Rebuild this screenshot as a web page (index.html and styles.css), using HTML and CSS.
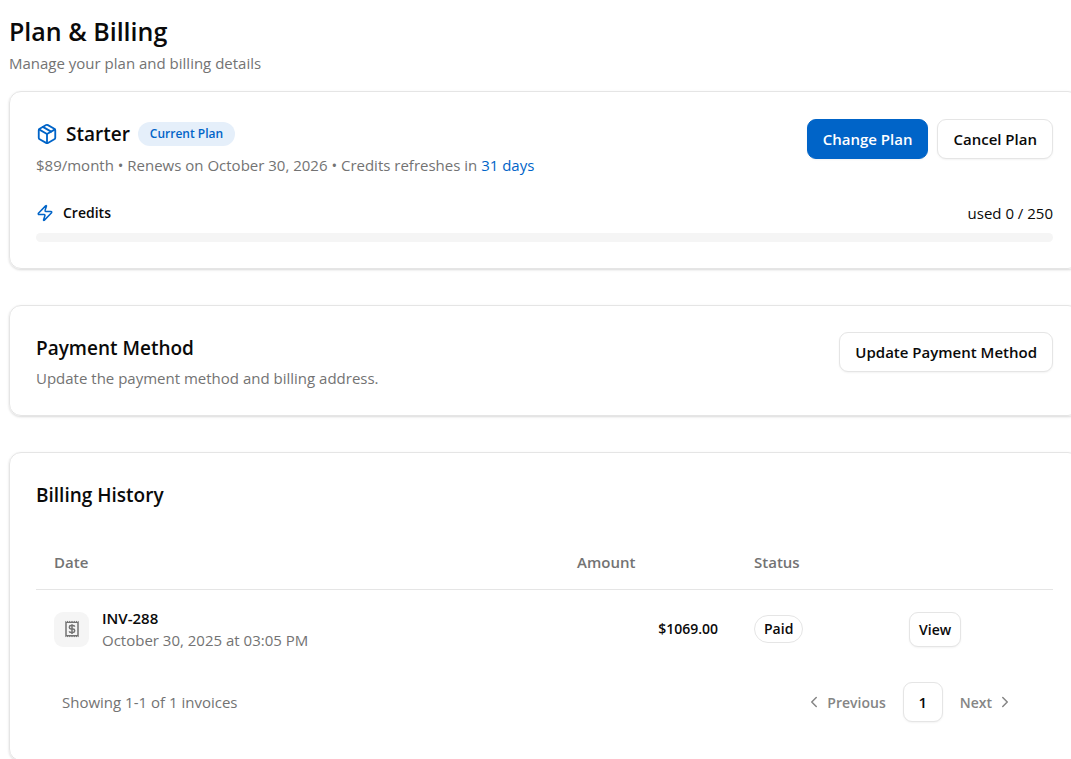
FILE: index.html
```html
<!DOCTYPE html>
<html lang="en">
<head>
    <meta charset="UTF-8">
    <meta name="viewport" content="width=device-width, initial-scale=1.0">
    <title>Plan &amp; Billing</title>
    <link rel="stylesheet" href="styles.css">
</head>
<body>
    <main class="page">
        <header class="page-header">
            <h1>Plan &amp; Billing</h1>
            <p class="muted">Manage your plan and billing details</p>
        </header>

        <!-- Current plan -->
        <section class="card plan-card">
            <div class="card-top">
                <div>
                    <div class="plan-title">
                        <svg class="icon icon-plan" viewBox="0 0 24 24" width="22" height="22">
                            <path d="M11 21.73a2 2 0 0 0 2 0l7-4A2 2 0 0 0 21 16V8a2 2 0 0 0-1-1.73l-7-4a2 2 0 0 0-2 0l-7 4A2 2 0 0 0 3 8v8a2 2 0 0 0 1 1.73z"/>
                            <path d="M12 22V12"/>
                            <path d="M3.29 7 12 12l8.71-5"/>
                            <path d="m7.5 4.27 9 5.15"/>
                        </svg>
                        <h2>Starter</h2>
                        <span class="plan-badge">Current Plan</span>
                    </div>
                    <p class="muted">$89/month • Renews on October 30, 2026 • Credits refreshes in <span class="days">31 days</span></p>
                </div>
                <div class="actions">
                    <button type="button" class="btn btn-primary">Change Plan</button>
                    <button type="button" class="btn">Cancel Plan</button>
                </div>
            </div>
            <div class="credits">
                <svg class="icon" viewBox="0 0 24 24" width="18" height="18">
                    <path d="M4 14a1 1 0 0 1-.78-1.63l9.9-10.2a.5.5 0 0 1 .86.46l-1.92 6.02A1 1 0 0 0 13 10h7a1 1 0 0 1 .78 1.63l-9.9 10.2a.5.5 0 0 1-.86-.46l1.92-6.02A1 1 0 0 0 11 14z"/>
                </svg>
                <span class="credits-label">Credits</span>
                <span class="credits-used">used 0 / 250</span>
            </div>
            <div class="progress" role="progressbar" aria-label="Credits" aria-valuenow="0" aria-valuemin="0" aria-valuemax="250"></div>
        </section>

        <!-- Payment method -->
        <section class="card payment-card">
            <div class="card-top">
                <div>
                    <h2>Payment Method</h2>
                    <p class="muted">Update the payment method and billing address.</p>
                </div>
                <button type="button" class="btn">Update Payment Method</button>
            </div>
        </section>

        <!-- Billing history -->
        <section class="card history-card">
            <h2>Billing History</h2>
            <table class="invoices">
                <thead>
                    <tr>
                        <th class="col-date">Date</th>
                        <th class="col-amount">Amount</th>
                        <th class="col-status">Status</th>
                        <th class="col-action"></th>
                    </tr>
                </thead>
                <tbody>
                    <tr>
                        <td>
                            <div class="invoice">
                                <span class="invoice-icon">
                                    <svg viewBox="0 0 24 24" width="18" height="18">
                                        <path fill-rule="evenodd" d="M3 1l1.500 1.500L6 1l1.500 1.500L9 1l1.500 1.500L12 1l1.500 1.500L15 1l1.500 1.500L18 1l1.500 1.500L21 1v22l-1.500-1.500L18 23l-1.500-1.500L15 23l-1.500-1.500L12 23l-1.500-1.500L9 23l-1.500-1.500L6 23l-1.500-1.500L3 23zM5 4v16h14V4z"/>
                                        <path class="dollar" d="M15.500 9c0-1-1-1.600-2.200-1.600h-2.600a2.200 2.200 0 0 0 0 4.500h2.600a2.200 2.200 0 0 1 0 4.600h-2.600c-1.300 0-2.200-.6-2.200-1.600M12 5.500v13"/>
                                    </svg>
                                </span>
                                <div>
                                    <div class="invoice-number">INV-288</div>
                                    <div class="invoice-date">October 30, 2025 at 03:05 PM</div>
                                </div>
                            </div>
                        </td>
                        <td class="amount">$1069.00</td>
                        <td><span class="status">Paid</span></td>
                        <td><button type="button" class="btn btn-small">View</button></td>
                    </tr>
                </tbody>
            </table>
            <div class="table-footer">
                <p class="muted">Showing 1-1 of 1 invoices</p>
                <nav class="pagination" aria-label="Pagination">
                    <button type="button" class="page-link" disabled>
                        <svg class="icon" viewBox="0 0 24 24" width="18" height="18"><path d="m15 18-6-6 6-6"/></svg>
                        Previous
                    </button>
                    <button type="button" class="btn page-number">1</button>
                    <button type="button" class="page-link" disabled>
                        Next
                        <svg class="icon" viewBox="0 0 24 24" width="18" height="18"><path d="m9 18 6-6-6-6"/></svg>
                    </button>
                </nav>
            </div>
        </section>
    </main>
</body>
</html>
```
FILE: styles.css
```css
* {
    box-sizing: border-box;
}

body {
    margin: 0;
    font-family: "Segoe UI", "Open Sans", sans-serif;
    font-size: 15px;
    line-height: 22px;
    color: #0a0a0a;
    background-color: #fff;
    overflow: hidden;
}

h1, h2, p {
    margin: 0;
}

h1 {
    font-size: 25px;
    font-weight: 600;
    line-height: 36px;
}

h2 {
    font-size: 19px;
    font-weight: 600;
    line-height: 28px;
}

.page {
    display: flex;
    flex-direction: column;
    gap: 36px;
    padding: 13px 0 0 9px;
    margin-right: -9px; /* Cards run past the right edge */
}

.page-header {
    margin-bottom: -19px; /* Header sits closer to the first card */
}

.page-header .muted {
    margin-top: 3px;
}

.muted {
    color: #737373;
}

.card {
    padding: 26px;
    border: 1px solid #e5e5e5;
    border-radius: 12px;
    box-shadow: 0 1px 3px rgba(0, 0, 0, 0.1), 0 1px 2px rgba(0, 0, 0, 0.06);
}

.plan-card {
    padding-top: 27px;
}

.card-top {
    display: flex;
    justify-content: space-between;
    align-items: flex-start;
}

.plan-title {
    display: flex;
    align-items: center;
    gap: 8px;
    padding-top: 1px;
    margin-bottom: 6px;
}

.icon {
    fill: none;
    stroke: currentColor;
    stroke-width: 2;
    stroke-linecap: round;
    stroke-linejoin: round;
    flex-shrink: 0;
}

.plan-title .icon,
.credits .icon,
.days {
    color: #0064c8;
}

.plan-badge {
    padding: 2px 12px;
    border-radius: 12px;
    background-color: #e5effa;
    color: #0064c8;
    font-size: 12px;
    font-weight: 600;
    line-height: 20px;
}

.actions {
    display: flex;
    gap: 9px;
}

.btn {
    height: 40px;
    padding: 0 15px;
    border: 1px solid #e5e5e5;
    border-radius: 9px;
    background-color: #fff;
    color: #0a0a0a;
    font-family: inherit;
    font-size: 15px;
    font-weight: 600;
    box-shadow: 0 1px 2px rgba(0, 0, 0, 0.05);
    cursor: pointer;
}

.btn-primary {
    border-color: #0064c8;
    background-color: #0064c8;
    color: #fff;
}

.btn-small {
    height: 35px;
    padding: 0 9px;
    font-size: 14px;
}

.credits {
    display: flex;
    align-items: center;
    gap: 9px;
    margin-top: 26px;
    margin-bottom: 9px;
}

.credits-label {
    font-size: 14px;
    font-weight: 600;
}

.credits-used {
    margin-left: auto;
}

.progress {
    height: 9px;
    border-radius: 5px;
    background-color: #f5f5f5;
}

.payment-card h2 {
    padding-top: 2px;
    margin-bottom: 5px;
}

.history-card {
    padding-top: 28px;
    padding-bottom: 38px;
}

/* Invoices table */
.invoices {
    width: 100%;
    margin-top: 27px;
    border-collapse: collapse;
    table-layout: fixed;
}

.invoices th {
    height: 53px;
    padding: 0 18px;
    border-bottom: 1px solid #e5e5e5;
    color: #737373;
    font-weight: 600;
    text-align: left;
}

.invoices td {
    height: 80px;
    padding: 0 18px;
}

.col-amount {
    width: 177px;
}

.col-status {
    width: 155px;
}

.col-action {
    width: 162px;
}

.invoice {
    display: flex;
    align-items: center;
    gap: 13px;
}

.invoice-icon {
    display: flex;
    align-items: center;
    justify-content: center;
    width: 35px;
    height: 35px;
    border-radius: 9px;
    background-color: #f5f5f5;
    fill: #737373;
}

.dollar {
    fill: none;
    stroke: #737373;
    stroke-width: 2;
}

.invoice-number {
    font-weight: 600;
}

.invoice-date {
    color: #737373;
}

.invoices .amount {
    font-size: 14px;
    font-weight: 600;
    text-align: right;
}

.status {
    display: inline-block;
    padding: 2px 9px;
    border: 1px solid #e5e5e5;
    border-radius: 14px;
    font-size: 14px;
    font-weight: 600;
}

.table-footer {
    display: flex;
    align-items: center;
    justify-content: space-between;
    padding: 13px 22px 0 26px;
}

.pagination {
    display: flex;
    align-items: center;
}

.page-link {
    display: flex;
    align-items: center;
    gap: 4px;
    height: 40px;
    padding: 0 17px;
    border: none;
    background: none;
    color: #858585;
    font-family: inherit;
    font-size: 14px;
    font-weight: 600;
}

.page-number {
    width: 40px;
    padding: 0;
}
```
